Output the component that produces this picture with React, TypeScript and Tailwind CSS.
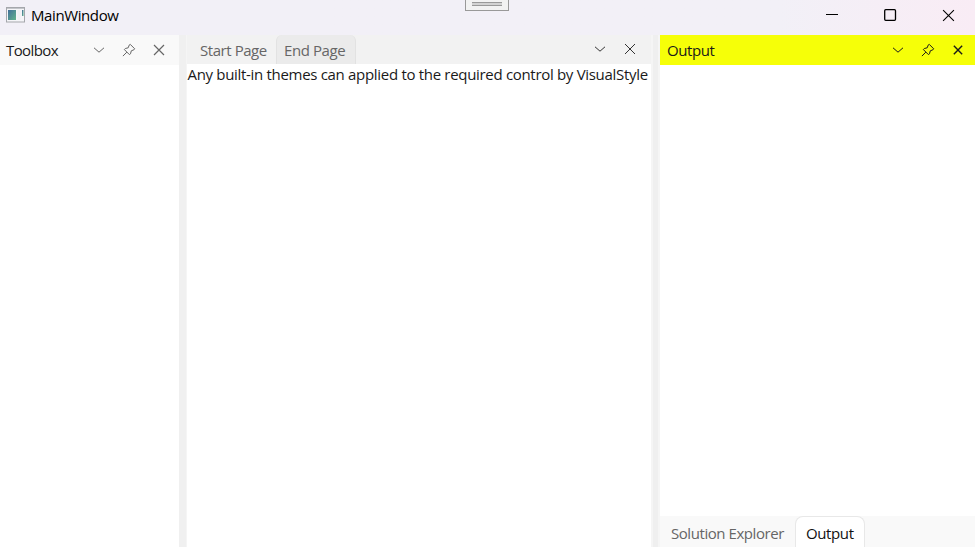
import type { ReactNode } from 'react';

const Chevron = () => (
  <svg width="12" height="12" viewBox="0 0 12 12" fill="none" stroke="currentColor" strokeWidth="1">
    <path d="M1 3.8 6 8.2 11 3.8" />
  </svg>
);

const Pin = () => (
  <svg width="14" height="14" viewBox="0 0 14 14" fill="none" stroke="currentColor" strokeWidth="1" strokeLinejoin="round">
    <path d="M8.2 1.3 12.7 5.8 11.9 6.8 9.3 7.8 8.5 10.8 7.4 11.6 2.4 6.6 3.3 5.5 6.2 4.8 7.2 2.1ZM4.9 9.1.9 13.1" />
  </svg>
);

const Cross = ({ size = 12, weight = 1.2 }: { size?: number; weight?: number }) => (
  <svg width={size} height={size} viewBox="0 0 12 12" fill="none" stroke="currentColor" strokeWidth={weight}>
    <path d="M1 1 11 11M11 1 1 11" />
  </svg>
);

const Cell = ({ children }: { children: ReactNode }) => (
  <div className="flex w-[30px] items-center justify-center">{children}</div>
);

const TitleBar = () => (
  <header className="relative flex h-[35px] shrink-0 bg-linear-to-r from-[#f2f0f7] from-80% to-[#f9ecf5]">
    <svg className="mt-[7px] ml-[6px]" width="19" height="16" viewBox="0 0 19 16">
      <defs>
        <linearGradient id="pane" x1="0" y1="0" x2="1" y2="1">
          <stop offset="0" stopColor="#416f9a" />
          <stop offset="1" stopColor="#62b38b" />
        </linearGradient>
      </defs>
      <rect x=".5" y=".5" width="18" height="14.5" fill="#f5f5f8" stroke="#a5a7ac" />
      <path d="M1 1.5H18" stroke="#c3c5ca" />
      <rect x="2" y="3" width="8" height="10" fill="url(#pane)" />
      <rect x="11.5" y="3" width="3" height="10" fill="#f0f0f3" />
      <rect x="16" y="3" width="1.5" height="6" fill="url(#pane)" />
    </svg>
    <span className="mt-[5px] ml-[6px] tracking-[-0.4px] text-black">MainWindow</span>
    <div className="absolute top-[-1px] left-[465px] h-3 w-11 border border-[#999] bg-[#f2f2f2]">
      <div className="mx-auto mt-[2px] h-1 w-[30px] border-y border-[#999] bg-[#d2d2d2]" />
    </div>
    <div className="mr-5 ml-auto flex items-start gap-[45px] pt-[9px] text-black">
      <svg width="13" height="12" viewBox="0 0 13 12"><path d="M0 5.5H12" stroke="currentColor" /></svg>
      <svg width="13" height="12" viewBox="0 0 13 12"><rect x=".7" y=".7" width="10.8" height="10.6" rx="1" fill="none" stroke="currentColor" strokeWidth="1.3" /></svg>
      <Cross size={13} weight={1} />
    </div>
  </header>
);

export default function App() {
  return (
    <div className="flex h-[547px] w-[975px] flex-col overflow-hidden bg-[#f2f2f2] font-['Open_Sans','Noto_Sans',sans-serif] text-[15px] leading-5 whitespace-nowrap">
      <TitleBar />
      <main className="flex min-h-0 flex-1">
        <section className="flex w-[179px] flex-col bg-white">
          <div className="flex h-[30px] bg-[#f9f9f9] pr-[5px] pl-[6px] text-[#666]">
            <span className="mt-[5px] mr-auto tracking-[-0.6px] text-[#1a1a1a]">Toolbox</span>
            <Cell><Chevron /></Cell>
            <Cell><Pin /></Cell>
            <Cell><Cross /></Cell>
          </div>
        </section>
        <div className="w-2 border-r border-[#f5f5f5] bg-[#f0f0f0]" />
        <section className="flex w-[464px] flex-col bg-white">
          <div className="flex h-[29px] bg-[#f2f2f2] pr-[6px] text-[#666]">
            <span className="mt-[5px] w-[89px] pl-[13px] tracking-[-0.44px]">Start Page</span>
            <div className="flex w-[80px] rounded-t-md border-x border-[#e2e2e2] bg-[#ebebeb] pt-[5px] pl-[7px] tracking-[-0.42px]">End Page</div>
            <div className="ml-auto flex pb-[1px] text-[#333]">
              <Cell><Chevron /></Cell>
              <Cell><Cross weight={1} /></Cell>
            </div>
          </div>
          <p className="pl-[0.5px] tracking-[-0.31px] text-[#1a1a1a]">Any built-in themes can applied to the required control by VisualStyle</p>
        </section>
        <div className="w-[9px] border-r-2 border-l-2 border-[#f5f5f5] bg-[#efefef]" />
        <section className="flex w-[315px] flex-col bg-white">
          <div className="flex h-[30px] bg-[#f6ff08] pr-[2px] pl-[7px] text-[#1a1a1a]">
            <span className="mt-[5px] mr-auto tracking-[-0.42px]">Output</span>
            <Cell><Chevron /></Cell>
            <Cell><Pin /></Cell>
            <Cell><Cross size={10} weight={1.7} /></Cell>
          </div>
          <div className="mt-auto flex h-[31px] bg-[#f9f9f9]">
            <span className="mt-[7px] w-[135px] pl-[11px] tracking-[-0.44px] text-[#666]">Solution Explorer</span>
            <div className="w-[70px] rounded-t-lg border border-b-0 border-[#e8e8e8] bg-white pt-[6px] pl-[10px] tracking-[-0.38px] text-[#111]">Output</div>
          </div>
        </section>
      </main>
    </div>
  );
}
